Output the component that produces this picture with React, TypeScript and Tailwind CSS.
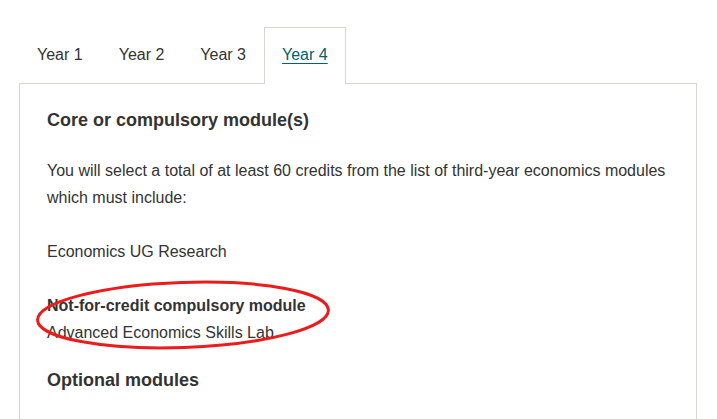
import { useState } from "react";

const years = ["Year 1", "Year 2", "Year 3", "Year 4"];

export default function App() {
  const [active, setActive] = useState(3);

  return (
    <div
      className="relative w-[717px] h-[419px] overflow-hidden bg-white text-[#333333]"
      style={{ fontFamily: "'Liberation Sans', Arial, sans-serif" }}
    >
      <div className="pl-[19px] pr-[20px] pt-[27px]">
        {/* tabs */}
        <div className="flex relative z-10 -mb-px">
          {years.map((y, i) => (
            <button
              key={y}
              onClick={() => setActive(i)}
              className={
                i === active
                  ? "h-[57px] pb-[2px] px-[17px] text-[16px] border border-b-0 border-[#d6d6ce] bg-white text-[#00616e] underline underline-offset-[3px] flex items-center"
                  : "h-[57px] pb-[2px] px-[17px] text-[16px] border border-transparent border-b-0 text-[#333333] flex items-center"
              }
            >
              {y}
            </button>
          ))}
        </div>

        {/* panel */}
        <div className="border border-[#d6d6ce] pl-[27px] pr-[27px] pt-[23px] pb-10 min-h-[400px]">
          <h3 className="text-[18px] leading-[27px] font-bold mb-[23px]">Core or compulsory module(s)</h3>
          <p className="text-[16px] leading-[27px] mb-[27px]">
            You will select a total of at least 60 credits from the list of third-year economics modules which must include:
          </p>
          <p className="text-[16px] leading-[27px] mb-[27px]">Economics UG Research</p>
          <p className="text-[16px] leading-[27px] font-bold">Not-for-credit compulsory module</p>
          <p className="text-[16px] leading-[27px] mb-[21px]">Advanced Economics Skills Lab</p>
          <h3 className="text-[18px] leading-[27px] font-bold">Optional modules</h3>
        </div>
      </div>

      {/* hand-drawn highlight */}
      <svg className="absolute left-0 top-0 pointer-events-none" width="717" height="419">
        <ellipse
          cx="183"
          cy="315"
          rx="145.5"
          ry="32.5"
          fill="none"
          stroke="#ec1c1c"
          strokeWidth="3"
          transform="rotate(-2 183 315)"
        />
      </svg>
    </div>
  );
}
